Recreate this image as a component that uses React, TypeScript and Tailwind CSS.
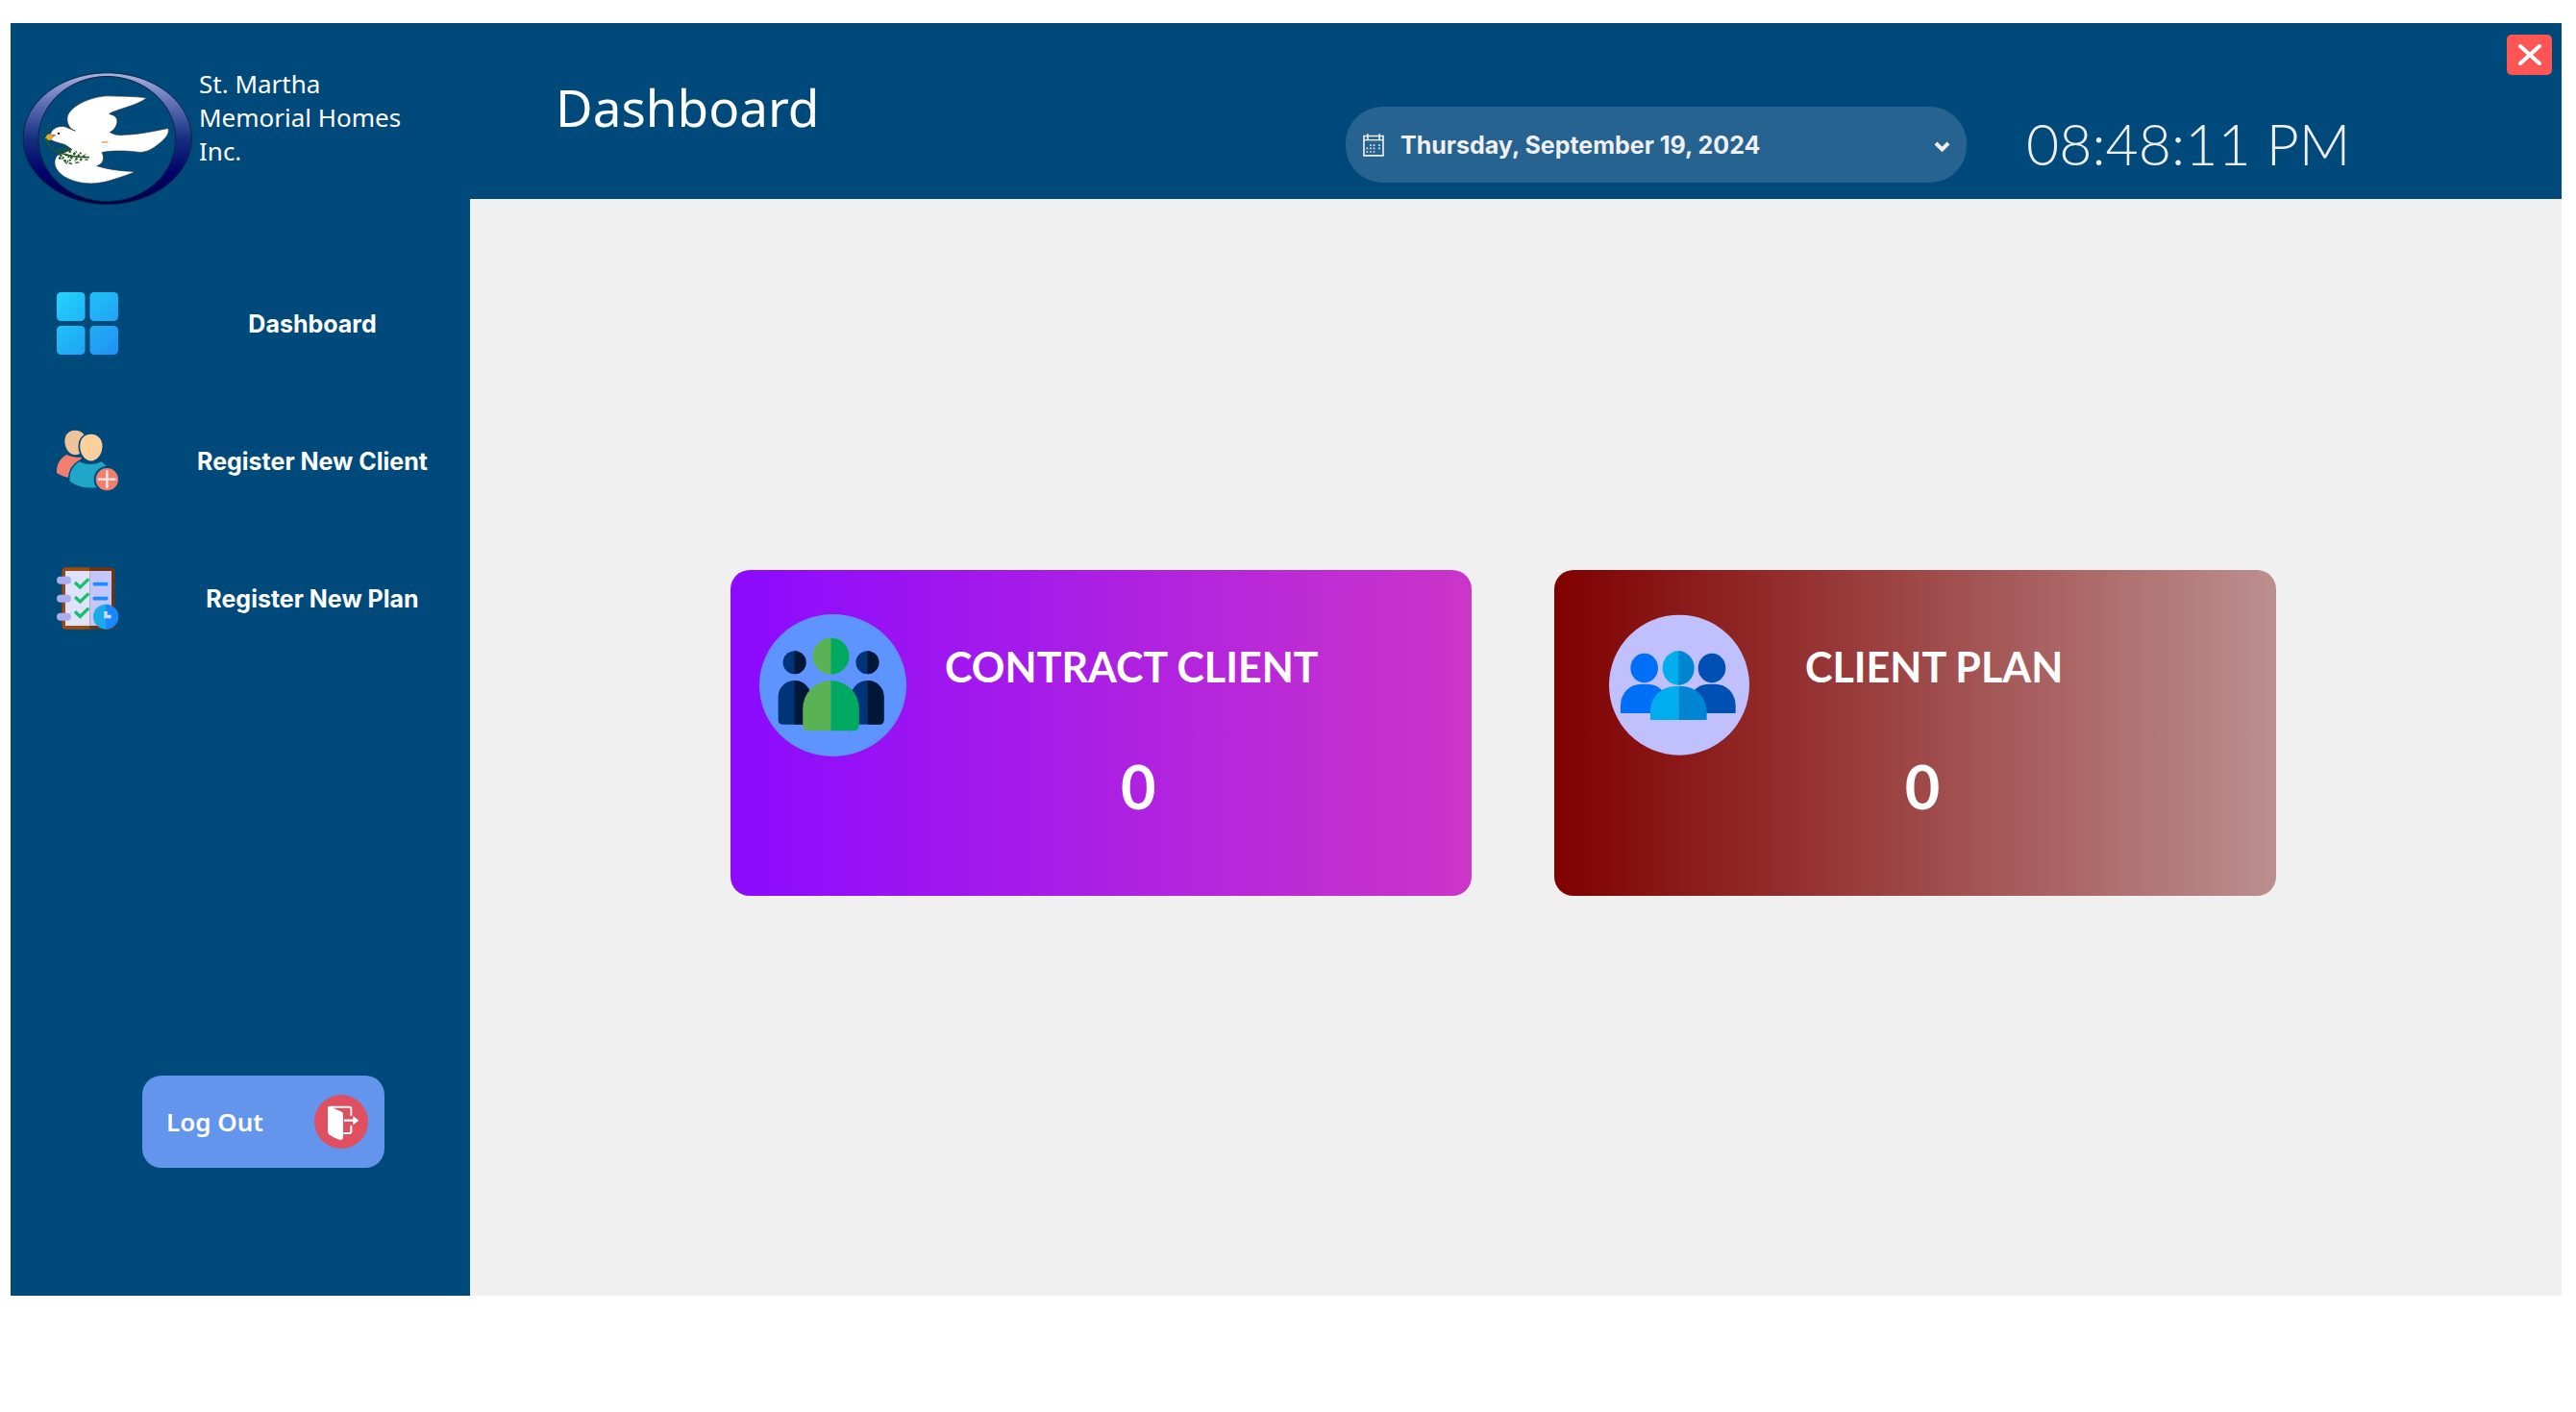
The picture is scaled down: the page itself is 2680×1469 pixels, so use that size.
import type { ReactNode } from "react";

const humanist = "font-['Noto_Sans',sans-serif]";
const grotesk = "font-['Inter',sans-serif]";
const geometric = "font-['Lato',sans-serif]";

function DoveLogo() {
  return (
    <svg viewBox="66 195 531 416" className="h-[139px] w-[177px] shrink-0" role="img" aria-label="St. Martha Memorial Homes logo">
      <defs>
        <linearGradient id="ring" x1="0" y1="0" x2="0" y2="1">
          <stop offset="0" stopColor="#a9b4e2" />
          <stop offset="0.22" stopColor="#6273b8" />
          <stop offset="0.5" stopColor="#14307f" />
          <stop offset="0.75" stopColor="#00046b" />
          <stop offset="1" stopColor="#000048" />
        </linearGradient>
      </defs>
      <path
        fillRule="evenodd"
        fill="url(#ring)"
        stroke="#10223f"
        strokeWidth="3"
        d="M332 197a263 205 0 1 0 0.1 0ZM331 208a214 195 0 1 1 -0.1 0Z"
      />
      <path
        fill="#fff"
        stroke="#2a3440"
        strokeWidth="2"
        d="M455 275C420 270 370 270 325 269C270 275 215 302 207 335C205 356 214 372 232 378L207 368C190 358 162 366 155 386L148 400C160 412 182 415 200 421L222 436L175 455C160 476 168 500 196 520C240 546 290 546 330 536C365 525 395 517 418 505C380 504 330 498 299 487C318 482 325 465 315 445C350 438 400 440 435 445C465 443 480 428 497 415C515 400 527 385 522 370C480 378 430 390 385 390C365 394 350 388 340 382C362 372 368 345 358 335C352 328 345 328 338 325C355 312 425 300 455 275Z"
      />
      <path d="M137 402L146 388L163 388L166 396L152 408Z" fill="#e0b020" />
      <path d="M158 392h12" stroke="#d0607a" strokeWidth="5" />
      <path d="M144 380L146 364L158 357" fill="none" stroke="#2c5a2a" strokeWidth="3" />
      <circle cx="180" cy="386" r="3.5" fill="#111" />
      <path d="M314 413h20" stroke="#e2b06a" strokeWidth="5" />
      <path d="M312 425h22" stroke="#f2e0c8" strokeWidth="3" />
      <g fill="none" stroke="#25591f">
        <path d="M140 402C150 425 165 440 182 446C210 456 240 462 276 460" strokeWidth="5" />
        <path d="M182 438l14-6M196 440l16-6M184 452l12 12M200 450l14 10M214 446l4-12M226 452l10-10M222 458l-8 14M240 458l10-12M238 462l-8 10M256 460l8-10M252 464l-6 8M180 462l12 4M196 470l14 4" strokeWidth="7" strokeDasharray="8 3" />
        <path d="M212 478l10 3M232 478l12-2M200 476l6 4M262 468l10 0" strokeWidth="4" />
      </g>
    </svg>
  );
}

function TilesIcon() {
  return (
    <svg viewBox="0 0 64 65" className="h-[65px] w-[64px]" aria-hidden="true">
      <defs>
        <linearGradient id="tiles" gradientUnits="userSpaceOnUse" x1="0" y1="0" x2="64" y2="65">
          <stop offset="0" stopColor="#22d3fb" />
          <stop offset="1" stopColor="#2090f2" />
        </linearGradient>
      </defs>
      <g fill="url(#tiles)">
        <rect x="0" y="0" width="29.5" height="30" rx="4.5" />
        <rect x="34.5" y="0" width="29.5" height="30" rx="4.5" />
        <rect x="0" y="35" width="29.5" height="30" rx="4.5" />
        <rect x="34.5" y="35" width="29.5" height="30" rx="4.5" />
      </g>
    </svg>
  );
}

function AddClientIcon() {
  const sea = "#00497b";
  return (
    <svg viewBox="57 500 192 195" className="h-[65px] w-[64px]" aria-hidden="true">
      <path d="M82 536C82 514 96 502 114 502C134 502 148 515 148 536C148 562 132 579 116 579C98 579 82 560 82 536Z" fill="#efc49a" />
      <path d="M88 578C68 590 56 606 57 635C68 642 80 647 92 649L136 586C118 588 102 584 88 578Z" fill="#f07f70" />
      <path d="M127 552C127 527 143 512 164 512C186 512 202 528 202 552C202 578 184 600 164 600C145 600 127 578 127 552Z" fill="#fcd09c" stroke={sea} strokeWidth="5" />
      <path d="M128 597C105 610 92 630 96 662C120 680 155 687 188 682L214 612L196 597C178 608 148 609 128 597Z" fill="#1fa6c8" stroke={sea} strokeWidth="4" />
      <circle cx="214" cy="655" r="38" fill="#f07f70" stroke={sea} strokeWidth="6" />
      <path d="M214 630v50M189 655h50" stroke="#fde9e6" strokeWidth="7" strokeLinecap="round" />
    </svg>
  );
}

function PlanIcon() {
  return (
    <svg viewBox="57 930 192 195" className="h-[65px] w-[64px]" aria-hidden="true">
      <rect x="74" y="931" width="164" height="193" rx="12" fill="#6f3510" />
      <path d="M160 931H86a12 12 0 0 0-12 12v169a12 12 0 0 0 12 12h74Z" fill="#9a4b13" />
      <rect x="84" y="942" width="76" height="171" fill="#e0e2fa" />
      <rect x="160" y="942" width="68" height="171" fill="#c3c6f7" />
      <g fill="#a9aeee">
        <rect x="57" y="959" width="45" height="24" rx="12" />
        <rect x="57" y="1016" width="45" height="24" rx="12" />
        <rect x="57" y="1073" width="45" height="24" rx="12" />
      </g>
      <g fill="none" stroke="#16bf6e" strokeWidth="10">
        <path d="M114 978l16 15 27-26" />
        <path d="M114 1023l16 15 27-26" />
        <path d="M114 1069l16 15 27-26" />
      </g>
      <path d="M175 983h37M175 1028h37" stroke="#1a8cff" strokeWidth="11" strokeLinecap="round" />
      <circle cx="210" cy="1085" r="39" fill="#1caae8" />
      <path d="M210 1046a39 39 0 0 1 0 78Z" fill="#1788ff" />
      <path d="M205 1068h10v11h12v11h-22Z" fill="#d6d9fa" />
    </svg>
  );
}

function ExitIcon() {
  return (
    <svg viewBox="591 119 168 168" className="size-[56px] shrink-0" aria-hidden="true">
      <circle cx="675" cy="203" r="84" fill="#e04f5f" />
      <path d="M636 154L677 172Q681 174 681 180V252Q680 260 672 260Q648 252 636 242Q633 238 633 232V162Q633 156 636 154Z" fill="#fff" />
      <path d="M640 157H700Q706 157 706 163V184M706 214V234Q706 239 700 239H682" fill="none" stroke="#fff" strokeWidth="6" />
      <path d="M684 199h32" stroke="#fff" strokeWidth="7" />
      <path d="M712 185L730 199L712 213Z" fill="#fff" />
    </svg>
  );
}

function CalendarIcon() {
  return (
    <svg viewBox="53 83 68 73" className="h-[24px] w-[22px] shrink-0" fill="none" stroke="#f0f0f0" aria-hidden="true">
      <path d="M56 90h62v63h-62Z" strokeWidth="5" />
      <path d="M56 103h62" strokeWidth="4" />
      <path d="M68 83v19M106 83v19" strokeWidth="5" />
      <path d="M75 120h18M103 120h6" strokeWidth="5" strokeDasharray="5 6" />
      <path d="M64 130h29M103 130h6" strokeWidth="5" strokeDasharray="5 6" />
      <path d="M64 141h29" strokeWidth="5" strokeDasharray="5 6" />
    </svg>
  );
}

function ContractIcon() {
  return (
    <svg viewBox="119 176 460 444" preserveAspectRatio="none" className="h-[148px] w-[153px]" aria-hidden="true">
      <ellipse cx="349" cy="398" rx="230" ry="222" fill="#5e94ff" />
      <g fill="#003479">
        <circle cx="229" cy="327" r="36" />
        <circle cx="457" cy="327" r="36" />
        <path d="M178 433a51 50 0 0 1 102 0v87h-87q-15 0-15-15Z" />
        <path d="M406 433a51 50 0 0 1 102 0v72q0 15-15 15h-87Z" />
      </g>
      <g fill="#001737">
        <path d="M229 291a36 36 0 0 1 0 72Z" />
        <path d="M457 291a36 36 0 0 1 0 72Z" />
        <path d="M229 383a51 50 0 0 1 51 50v87h-51Z" />
        <path d="M458 383a51 50 0 0 1 51 50v72q0 15-15 15h-36Z" />
      </g>
      <circle cx="343" cy="307" r="57" fill="#5ab255" />
      <path d="M343 250a57 57 0 0 1 0 114Z" fill="#00a962" />
      <path d="M255 471a88 88 0 0 1 88-88v157h-68q-20 0-20-20Z" fill="#5ab255" />
      <path d="M343 383a88 88 0 0 1 88 88v49q0 20-20 20h-68Z" fill="#00a962" />
    </svg>
  );
}

function PlanGroupIcon() {
  return (
    <svg viewBox="223 180 438 441" className="h-[147px] w-[146px]" aria-hidden="true">
      <circle cx="442" cy="401" r="219" fill="#c0c0ff" />
      <ellipse cx="333" cy="348" rx="43" ry="46" fill="#006ff8" />
      <ellipse cx="544" cy="348" rx="43" ry="46" fill="#004fb2" />
      <path d="M259 489v-25a64 66 0 0 1 64-66h20a64 66 0 0 1 64 66v25Z" fill="#006ff8" />
      <path d="M470 489v-25a64 66 0 0 1 64-66h20a64 66 0 0 1 64 66v25Z" fill="#004fb2" />
      <ellipse cx="439" cy="348" rx="49" ry="53" fill="#00aeee" />
      <path d="M440 295a49 53 0 0 1 0 106Z" fill="#0085d2" />
      <path d="M352 510v-28a77 77 0 0 1 77-77h11v105Z" fill="#00aeee" />
      <path d="M440 405h11a77 77 0 0 1 77 77v28h-88Z" fill="#0085d2" />
    </svg>
  );
}

function NavItem({ icon, label }: { icon: ReactNode; label: string }) {
  return (
    <button type="button" className="flex h-[143px] w-full items-center pl-[48px]">
      {icon}
      <span className={`${grotesk} ml-[40px] flex-1 pr-[2px] text-center text-[25px] leading-[32px] font-bold`}>{label}</span>
    </button>
  );
}

type CardProps = { icon: ReactNode; title: string; value: number; tone: string; gap: string; valueShift: string };

function StatCard({ icon, title, value, tone, gap, valueShift }: CardProps) {
  return (
    <section className={`flex h-[339px] items-start rounded-[20px] ${tone}`}>
      <div className="pt-[46px]">{icon}</div>
      <div className={`${geometric} ${gap} pt-[75px] font-bold text-white`}>
        <h2 className="text-[43px] leading-[52px] whitespace-nowrap">{title}</h2>
        <p className={`mt-[60px] text-center text-[63px] leading-[76px] ${valueShift}`}>{value}</p>
      </div>
    </section>
  );
}

export default function App() {
  return (
    <div className="flex min-h-screen bg-white pt-[24px] pr-[15px] pb-[121px] pl-[11px]">
      <aside className="flex w-[478px] shrink-0 flex-col bg-[#00497b] text-white">
        <div className="flex h-[216px] items-start pt-[51px] pl-[12px]">
          <DoveLogo />
          <p className={`${humanist} -mt-[5px] ml-[7px] w-[240px] text-[26px] leading-[35px]`}>St. Martha Memorial Homes Inc.</p>
        </div>
        <nav className="mt-[25px] flex flex-col">
          <NavItem icon={<TilesIcon />} label="Dashboard" />
          <NavItem icon={<AddClientIcon />} label="Register New Client" />
          <NavItem icon={<PlanIcon />} label="Register New Plan" />
        </nav>
        <button
          type="button"
          className={`${humanist} mt-auto mb-[133px] ml-[137px] flex h-[96px] w-[252px] items-center justify-between rounded-[20px] bg-[#6495ed] pr-[17px] pl-[25px] text-[26px] leading-[36px] font-semibold`}
        >
          Log Out
          <ExitIcon />
        </button>
      </aside>

      <div className="flex min-w-0 flex-1 flex-col">
        <header className="flex h-[183px] items-start bg-[#00497b] pr-[10px] pl-[89px] text-white">
          <h1 className={`${humanist} pt-[52px] text-[53px] leading-[72px]`}>Dashboard</h1>
          <button
            type="button"
            aria-haspopup="dialog"
            className={`${grotesk} mt-[87px] ml-auto flex h-[79px] w-[646px] items-center rounded-[38px] bg-[#266390] pr-[17px] pl-[18px] text-[25px] leading-[32px] font-bold text-[#f0f0f0]`}
          >
            <CalendarIcon />
            <span className="ml-[17px]">Thursday, September 19, 2024</span>
            <svg viewBox="0 0 17 12" className="mt-1 ml-auto h-[12px] w-[17px]" fill="none" stroke="#f0f0f0" strokeWidth="4" aria-hidden="true">
              <path d="M2 2L8.5 8.5L15 2" />
            </svg>
          </button>
          <time className={`${geometric} mt-[90px] w-[562px] pl-[62px] text-[59px] leading-[72px] font-light whitespace-nowrap text-[#f0f0f0]`}>
            08:48:11 PM
          </time>
          <button type="button" aria-label="Close" className="mt-[12px] flex h-[42px] w-[47px] items-center justify-center rounded-[5px] bg-[#ff5555]">
            <svg viewBox="0 0 24 22" className="h-[22px] w-[24px]" fill="none" stroke="#fff" strokeWidth="4" strokeLinecap="round" aria-hidden="true">
              <path d="M2 2L22 20M22 2L2 20" />
            </svg>
          </button>
        </header>
        <main className="grid flex-1 grid-cols-[771fr_751fr] content-center gap-[86px] bg-[#f0f0f0] pr-[297px] pb-[30px] pl-[271px]">
          <StatCard
            icon={<ContractIcon />}
            title="CONTRACT CLIENT"
            value={0}
            tone="bg-linear-to-r/srgb from-[#8b0aff] to-[#cc35c8] pl-[30px]"
            gap="ml-[40px]"
            valueShift="pl-[14px]"
          />
          <StatCard
            icon={<PlanGroupIcon />}
            title="CLIENT PLAN"
            value={0}
            tone="bg-linear-to-r/srgb from-[#800000] to-[#bc8f8f] pl-[57px]"
            gap="ml-[58px]"
            valueShift="pr-[24px]"
          />
        </main>
      </div>
    </div>
  );
}
